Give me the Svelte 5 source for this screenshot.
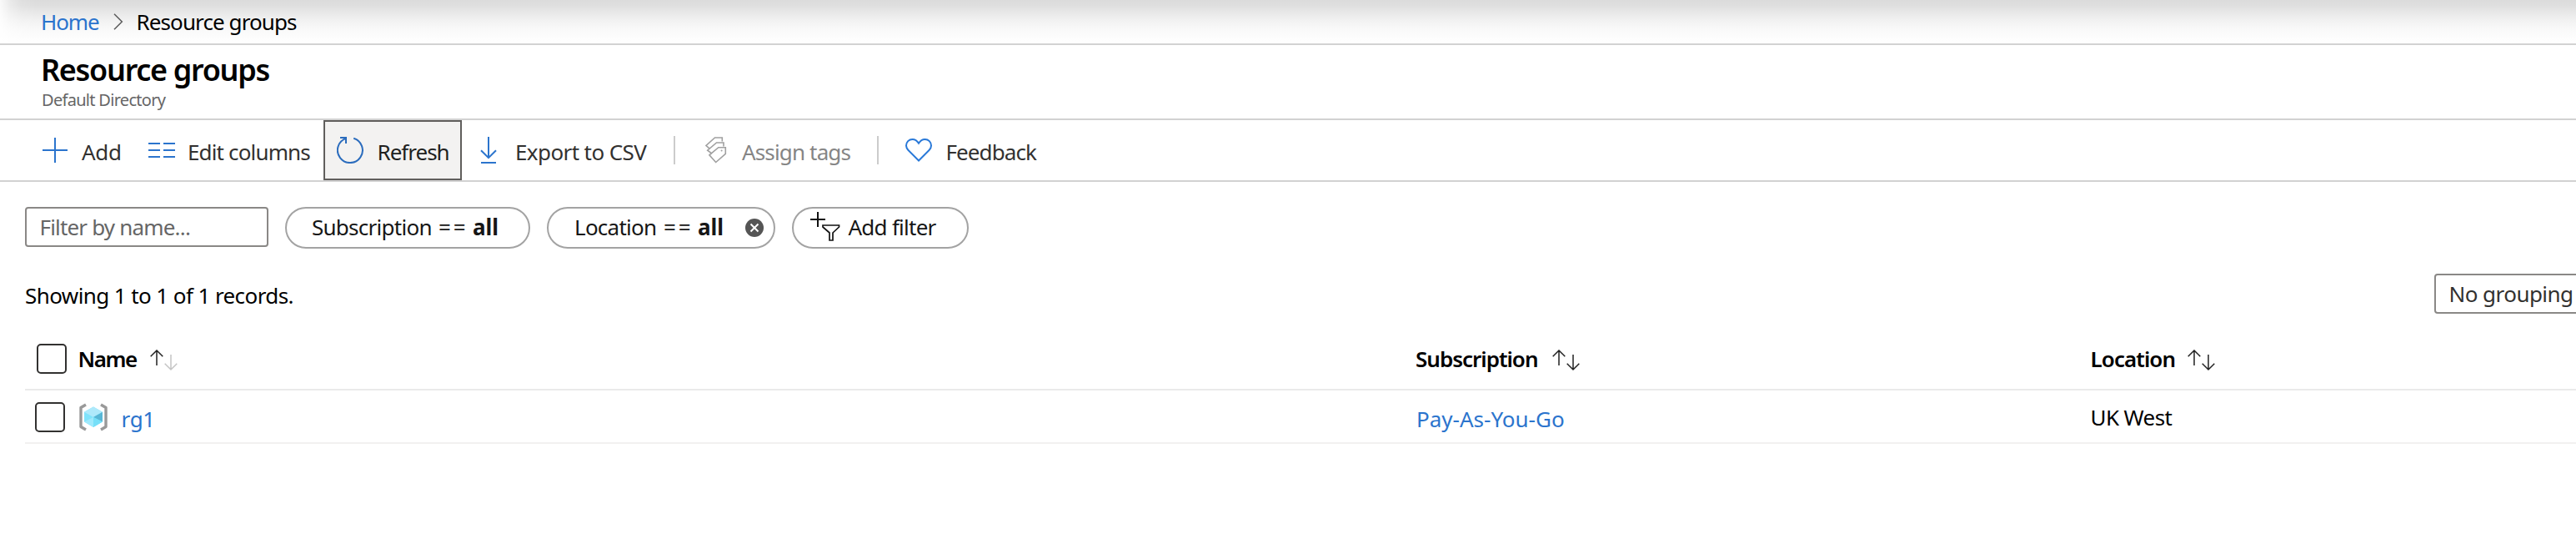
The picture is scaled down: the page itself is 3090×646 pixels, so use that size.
<script>
  const columns = [
    { label: 'Name', key: 'name', sorted: true },
    { label: 'Subscription', key: 'subscription', sorted: false },
    { label: 'Location', key: 'location', sorted: false }
  ];
  const groups = [{ name: 'rg1', subscription: 'Pay-As-You-Go', location: 'UK West' }];
</script>

<div class="page">
  <nav class="breadcrumb">
    <a class="home" href="#home">Home</a>
    <svg class="chevron" width="12" height="20" viewBox="0 0 12 20"><path d="M1 .7 10.3 10 1 19.3" fill="none" stroke="#5a5a5a" stroke-width="1.5" /></svg>
    <span class="current">Resource groups</span>
  </nav>

  <header class="heading">
    <h1>Resource groups</h1>
    <p>Default Directory</p>
  </header>

  <div class="toolbar">
    <button class="tool add">
      <svg width="30" height="30" viewBox="0 0 30 30"><path d="M15 0V30M0 15H30" stroke="#2b74cd" stroke-width="2" /></svg>
      <span>Add</span>
    </button>
    <button class="tool edit">
      <svg width="32" height="18" viewBox="0 0 32 18"><path d="M0 1H14M18 1H32M0 9H14M18 9H32M0 17H14M18 17H32" stroke="#2b74cd" stroke-width="2" /></svg>
      <span>Edit columns</span>
    </button>
    <button class="tool refresh">
      <svg width="32" height="32" viewBox="0 0 32 32" fill="none" stroke="#2b6cbd" stroke-width="2"><path d="M20.2 1.7A15 15 0 1 1 11 1.9" /><path d="M4 1H11V8" /></svg>
      <span>Refresh</span>
    </button>
    <button class="tool export">
      <svg width="20" height="32" viewBox="0 0 20 32" fill="none" stroke="#2b74cd" stroke-width="2"><path d="M10 0V25M1 16.2 10 25.2 19 16.2M1 31H19" /></svg>
      <span>Export to CSV</span>
    </button>
    <i class="divider"></i>
    <button class="tool tags">
      <svg width="26" height="32" viewBox="0 0 26 32" fill="none" stroke="#a0a0a0" stroke-width="1.6">
        <path d="M5.3 14.2 1 10.5 11.5 1H20.3V5.6" />
        <path d="M7.8 20 2.7 16.2 13.5 7H22V11.6" />
        <path d="M12.7 30.5 4.9 21.8 15.8 12.7H24.3V20.3Z" />
        <circle cx="19.6" cy="16.4" r="1" fill="#a0a0a0" stroke="none" />
      </svg>
      <span>Assign tags</span>
    </button>
    <i class="divider second"></i>
    <button class="tool feedback">
      <svg width="32" height="28" viewBox="0 0 32 28"><path d="M16 26.5 3.5 14A8.3 8.3 0 0 1 1 8.6C1 4.2 4.3 1 8.5 1c3.4 0 5.6 1.700 7.500 4.700C17.900 2.700 20.100 1 23.500 1 27.700 1 31 4.200 31 8.600c0 2.100-.9 3.900-2.500 5.400Z" fill="none" stroke="#2878d8" stroke-width="2" /></svg>
      <span>Feedback</span>
    </button>
  </div>

  <main>
    <div class="filters">
      <div class="search"><span>Filter by name...</span></div>
      <div class="pill subscription">
        <span class="field">Subscription</span><span class="op">==</span><b>all</b>
      </div>
      <div class="pill location">
        <span class="field">Location</span><span class="op">==</span><b>all</b>
        <svg class="clear" width="22" height="22" viewBox="0 0 22 22"><circle cx="11" cy="11" r="11" fill="#555" /><path d="m6.500 6.500 9 9m0-9-9 9" stroke="#fff" stroke-width="2" /></svg>
      </div>
      <div class="pill more">
        <svg width="36" height="36" viewBox="0 0 36 36" fill="none" stroke="#111" stroke-width="2"><path d="M9 0V18M0 9H18" /><path d="M15 16H34.500V18L27 25V34H23V25L15 18Z" stroke-width="1.700" /></svg>
        <span class="field">Add filter</span>
      </div>
    </div>

    <div class="summary">
      <span class="count">Showing 1 to 1 of 1 records.</span>
      <div class="grouping"><span>No grouping</span></div>
    </div>

    <div class="row head">
      <i class="check"></i>
      {#each columns as column}
        <div class="cell {column.key}">
          <span>{column.label}</span>
          <svg width="34" height="26" viewBox="0 0 34 26" fill="none" stroke="#222" stroke-width="1.500">
            <path d="M8 1V19M.7 8.200 8 1 15.300 8.200" />
            <path class:faded={column.sorted} d="M25 6V24M17.700 16.800 25 24 32.300 16.800" />
          </svg>
        </div>
      {/each}
    </div>

    {#each groups as group}
      <div class="row item">
        <i class="check"></i>
        <div class="cell name">
          <svg width="34" height="34" viewBox="0 0 34 34">
            <path d="M8 2 2 5.500V28.500L8 32" fill="none" stroke="#999" stroke-width="3.400" stroke-linejoin="round" />
            <path d="M26 2 32 5.500V28.500L26 32" fill="none" stroke="#999" stroke-width="3.400" stroke-linejoin="round" />
            <path d="M17 4.500 28 10.700V22.500L17 29 6 22.500V10.700Z" fill="#7fe3fb" />
            <path d="M17 4.500 28 10.700 17 17 6 10.700Z" fill="#aee9fb" />
            <path d="M6 22.500 17 17V29Z" fill="#9fe9fc" />
            <path d="M28 10.700V22.500L17 17Z" fill="#58b7d6" />
            <path d="M28 22.500 17 29V17Z" fill="#76dff8" />
          </svg>
          <a href="#group">{group.name}</a>
        </div>
        <div class="cell subscription"><a href="#subscription">{group.subscription}</a></div>
        <div class="cell location"><span>{group.location}</span></div>
      </div>
    {/each}
  </main>
</div>

<style>
  :global(body) { background: #fff; overflow: hidden; }
  .page {
    position: relative; width: 3090px; height: 646px; overflow: hidden;
    font: 26px/36px "Noto Sans", sans-serif; color: #000; white-space: nowrap;
  }
  .page :is(div, nav, header, button, i) { box-sizing: border-box; }
  svg { flex: none; display: block; }
  span, b, a { flex: none; }
  a { color: #2b74cd; text-decoration: none; }

  .breadcrumb {
    display: flex; align-items: center; height: 54px; padding-left: 49px;
    border-bottom: 2px solid #d2d2d2; position: relative; overflow: hidden;
  }
  .breadcrumb::before {
    content: ""; position: absolute; inset: 0;
    background: linear-gradient(#dbdbdb 0, #dedede 6px, #e8e8e8 15px, #f2f2f2 25px, #f9f9f9 35px, #fdfdfd 46px, #fff 52px);
    mask-image: linear-gradient(to right, rgba(0, 0, 0, .15), rgba(0, 0, 0, .6) 12px, rgba(0, 0, 0, .9) 26px, #000 44px);
  }
  .home { position: relative; width: 87px; letter-spacing: -1.1px; }
  .chevron { position: relative; }
  .current { position: relative; margin-left: 15.500px; letter-spacing: -.9px; }

  .heading { height: 90px; padding: 6px 0 0 49px; border-bottom: 2px solid #d2d2d2; }
  h1 { margin: 0; font-size: 36px; line-height: 48px; font-weight: 600; letter-spacing: -1.300px; }
  p { margin: 0 0 0 1px; font-size: 20px; line-height: 24px; letter-spacing: -.7px; color: #666; }

  .toolbar { display: flex; align-items: center; height: 74px; border-bottom: 2px solid #d2d2d2; }
  .tool {
    display: flex; align-items: center; flex: none; height: 72px; padding: 0; border: 0;
    background: none; font: inherit; color: #323130; white-space: nowrap;
  }
  .tool span { margin-top: 4px; }
  .add { width: 148px; padding-left: 21px; margin-left: 30px; gap: 17px; letter-spacing: -.3px; }
  .edit { width: 210px; gap: 15px; letter-spacing: -.85px; }
  .refresh {
    width: 166px; padding-left: 14px; gap: 16.500px; letter-spacing: -1px;
    background: #f3f2f1; border: 2px solid #605e5c; color: #201f1e;
  }
  .export { width: 254px; padding-left: 22px; gap: 22px; letter-spacing: -.6px; }
  .divider { flex: none; width: 2px; height: 34px; background: #ccc; }
  .tags { width: 242px; padding-left: 36px; gap: 18px; letter-spacing: -.85px; color: #858585; }
  .feedback { padding-left: 32px; gap: 16.500px; letter-spacing: -.9px; }

  .filters { display: flex; align-items: flex-start; height: 80px; padding: 0 0 0 30px; margin-top: 30px; }
  .search {
    width: 292px; height: 48px; padding-left: 15.500px; border: 2px solid #8a8886; border-radius: 4px;
    line-height: 44px; letter-spacing: -.82px; color: #666;
  }
  .pill {
    display: flex; align-items: center; height: 50px; border: 2px solid #a3a3a3; border-radius: 25px;
    margin-left: 20px; color: #161616;
  }
  .pill > :is(span, b) { margin-bottom: 2px; }
  .pill .field { letter-spacing: -.74px; }
  .op { letter-spacing: 3px; width: 41px; }
  .pill.subscription { width: 294px; padding-left: 30px; }
  .pill.subscription .field { width: 152px; }
  .pill.location { width: 274px; padding-left: 31px; }
  .pill.location .field { width: 107px; }
  .pill b { width: 57px; }
  .pill.more { width: 212px; padding-left: 20px; gap: 9.500px; }
  .pill.more svg { margin-top: -2px; }

  .summary { display: flex; justify-content: space-between; height: 48px; padding-left: 30px; }
  .count { line-height: 52px; letter-spacing: -.59px; }
  .grouping {
    width: 200px; height: 48px; padding-left: 15.500px; margin-right: -30px; border: 2px solid #8a8886;
    border-radius: 4px; line-height: 44px; letter-spacing: -.55px; color: #323130;
  }

  .row { display: grid; grid-template-columns: 63.500px 1604.500px 809.500px 1fr; align-items: center; margin-left: 30px; }
  .head { height: 74px; margin-top: 18px; border-bottom: 2px solid #eaeaea; font-weight: 600; }
  .item { height: 64px; padding-top: 2px; border-bottom: 2px solid #f2f1f0; }
  .check { width: 36px; height: 36px; margin-left: 14px; border: 2px solid #323130; border-radius: 5px; }
  .item .check { margin-left: 12px; }
  .cell { display: flex; align-items: center; }
  .head .name span { width: 86.500px; letter-spacing: -1.400px; }
  .head .subscription span { width: 163.500px; letter-spacing: -1px; }
  .head .location span { width: 116.500px; letter-spacing: -.93px; }
  .head svg { margin-top: 3px; }
  .faded { stroke: #c4c4c4; }
  .item .name { padding-left: 1.500px; gap: 16.500px; letter-spacing: -.3px; }
  .item a { margin-top: 4px; }
  .item .subscription { padding-left: 1px; }
  .item .location { letter-spacing: -.6px; }
</style>
